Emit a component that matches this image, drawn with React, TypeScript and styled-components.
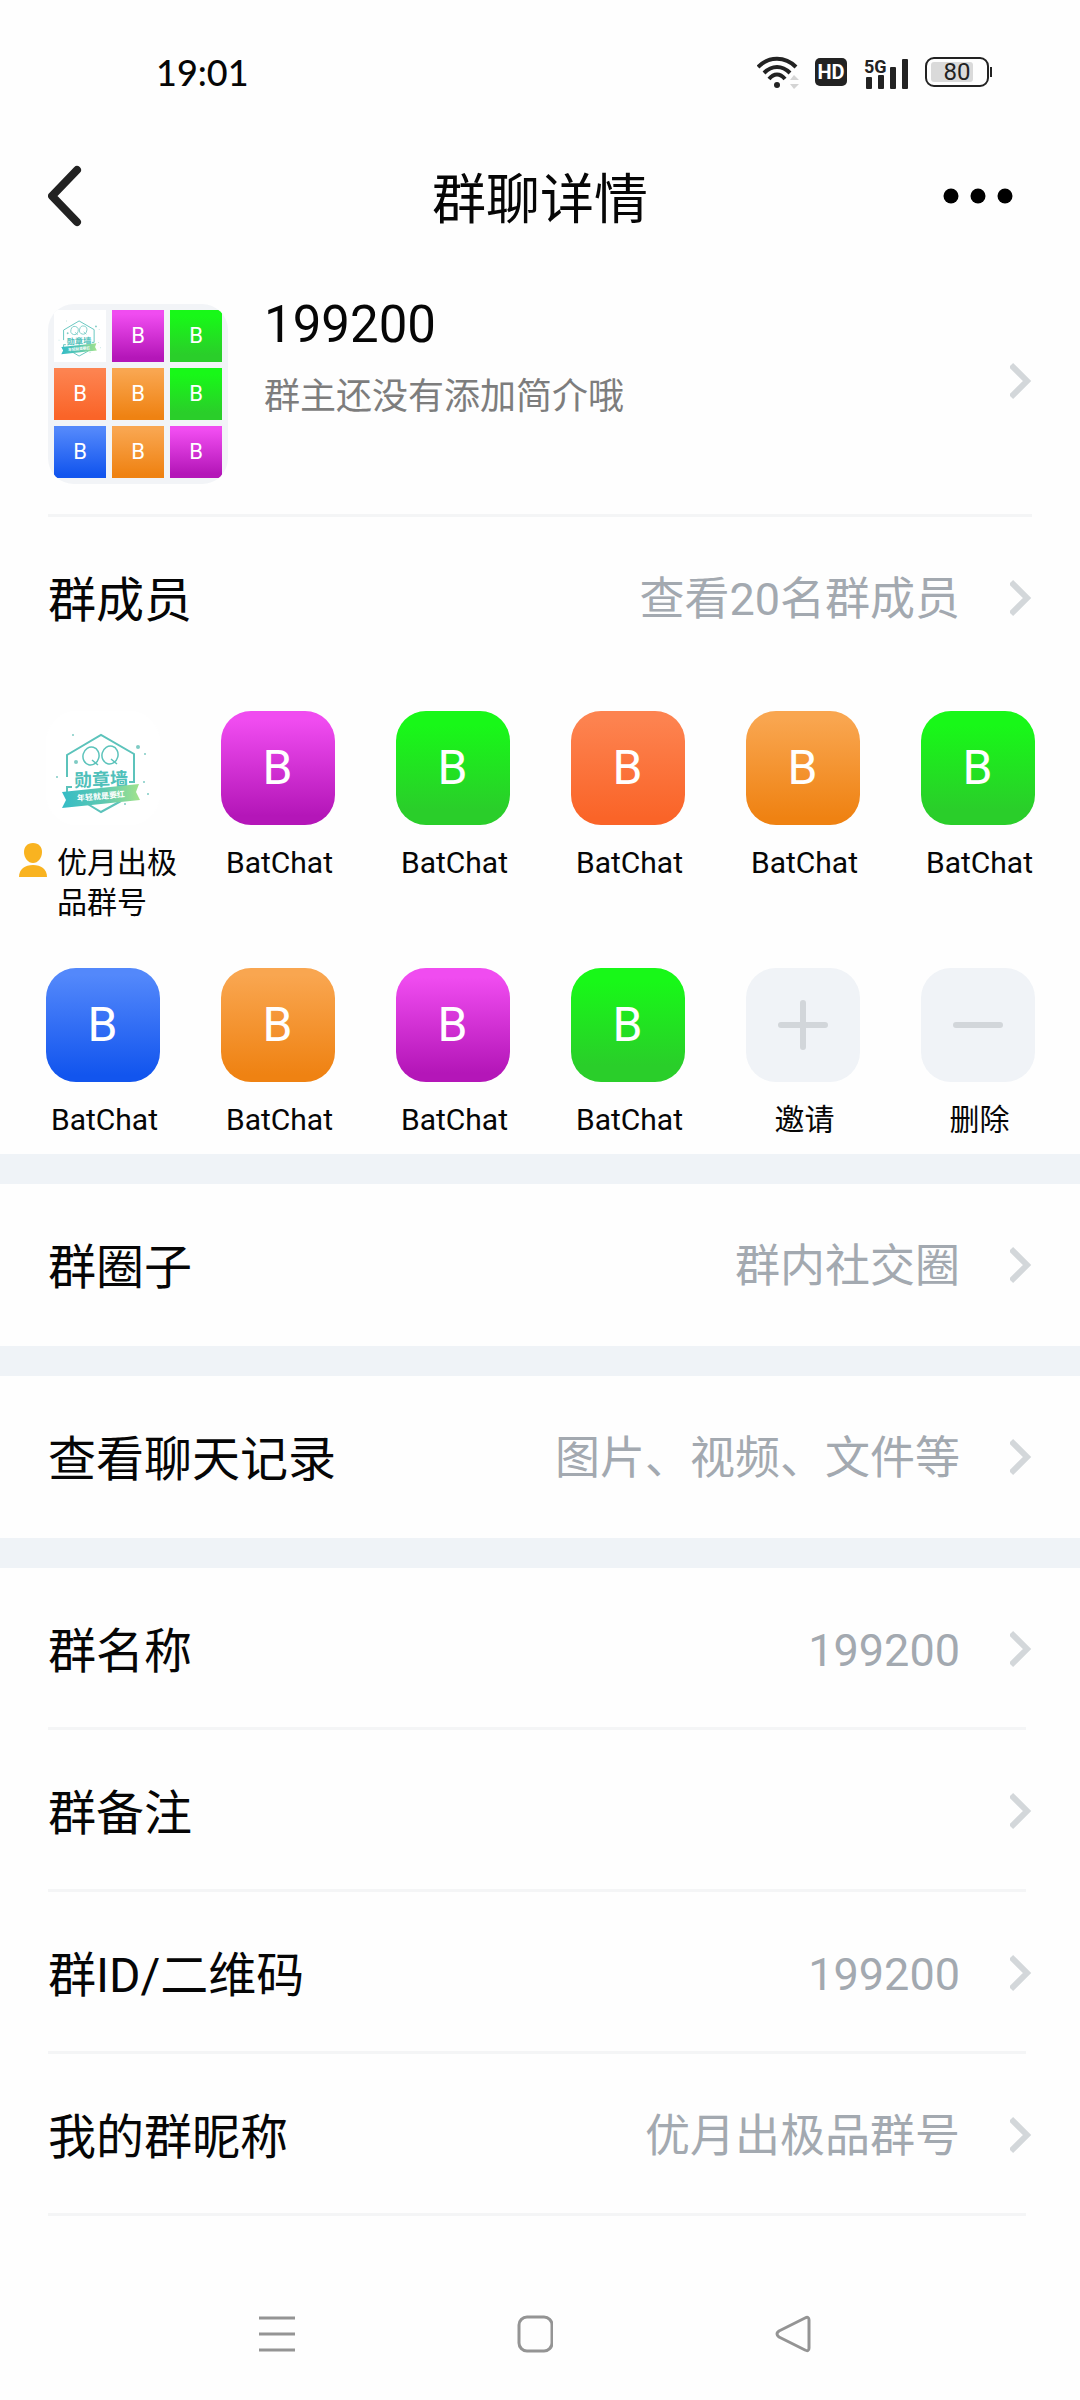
import React from "react";
import styled, { createGlobalStyle } from "styled-components";

const sans = `Roboto, "Noto Sans CJK SC", sans-serif`;

const GlobalStyle = createGlobalStyle`
  *, *::before, *::after { box-sizing: border-box; }
  html { -webkit-text-size-adjust: 100%; }
  body { margin: 0; background: #fefefe; color: #060606; font-family: ${sans}; }
  button { margin: 0; padding: 0; border: 0; background: none; color: inherit; font: inherit; cursor: pointer; }
  h1, h2, p, ul { margin: 0; padding: 0; font-weight: 400; }
  ul { list-style: none; }
  svg { display: block; flex: none; }
`;

type Tone = "magenta" | "green" | "coral" | "amber" | "blue";

const tones: Record<Tone, string> = {
  magenta: "linear-gradient(180deg, #f04cf0 8%, #b416b8 92%)",
  green: "linear-gradient(180deg, #18f818 12%, #2ace2a 86%)",
  coral: "linear-gradient(180deg, #fd8350 6%, #fa6428 94%)",
  amber: "linear-gradient(180deg, #f9a650 6%, #ef8212 94%)",
  blue: "linear-gradient(180deg, #5388fb 6%, #1255ee 94%)",
};

const Page = styled.div`
  display: flex;
  flex-direction: column;
  min-height: 100vh;
`;

/* ---------- status bar ---------- */

const StatusBar = styled.div`
  display: flex;
  align-items: center;
  justify-content: space-between;
  height: 145px;
  padding: 0 87px 2px 156px;
`;

const Clock = styled.time`
  font: 500 36px/44px Lato, ${sans};
`;

const StatusIcons = styled.div`
  display: flex;
  align-items: center;
  gap: 16px;
`;

const WifiIcon = () => (
  <svg width="42" height="36" viewBox="0 0 42 36" fill="none" aria-label="Wi-Fi">
    <g stroke="#222" strokeWidth="4">
      <path d="M1 13C12 2 28 2 39 13" />
      <path d="M7 19C15 11 25 11 33 19" />
      <path d="M12 25C17 19 23 19 28 25" />
    </g>
    <circle cx="20" cy="31" r="3" fill="#222" />
    <path d="M33 26L37 21L42 26ZM33 30L37 35L42 30Z" fill="#d4d4d4" />
  </svg>
);

const HdBadge = styled.span`
  display: grid;
  place-items: center;
  width: 32px;
  height: 28px;
  border-radius: 5px;
  background: #222;
  color: #fff;
  font: 700 20px/28px ${sans};
`;

const SignalIcon = () => (
  <svg width="46" height="34" viewBox="0 0 46 34" fill="#222" aria-label="5G">
    <text x="1" y="18" fontFamily="Roboto, sans-serif" fontWeight="700" fontSize="18">5G</text>
    <rect x="3" y="22" width="6" height="12" rx="1" />
    <rect x="15" y="20" width="6" height="14" rx="1" />
    <rect x="27" y="12" width="6" height="22" rx="1" />
    <rect x="39" y="4" width="6" height="30" rx="1" />
  </svg>
);

const BatteryIcon = () => (
  <svg width="68" height="30" viewBox="0 0 68 30" aria-label="80%">
    <rect x="6" y="5" width="42" height="20" rx="3" fill="#dadada" />
    <rect x="1" y="1" width="62" height="28" rx="8" fill="none" stroke="#222" strokeWidth="2" />
    <path d="M65 10h2v10h-2z" fill="#222" />
    <text x="32" y="23" textAnchor="middle" fontFamily="Roboto, sans-serif" fontSize="24" fill="#222">80</text>
  </svg>
);

/* ---------- title bar ---------- */

const TitleBar = styled.header`
  display: grid;
  grid-template-columns: 1fr auto 1fr;
  align-items: center;
  height: 102px;
  padding: 0 48px;
`;

const Title = styled.h1`
  padding-top: 10px;
  font-size: 54px;
  line-height: 64px;
`;

const BarButton = styled.button<{ $end?: boolean }>`
  justify-self: ${(p) => (p.$end ? "end" : "start")};
  padding-right: ${(p) => (p.$end ? 18 : 0)}px;
`;

/* ---------- group summary ---------- */

const Summary = styled.button`
  display: flex;
  align-items: center;
  width: 100%;
  padding: 30px 48px;
  text-align: left;
`;

const Mosaic = styled.span`
  display: grid;
  grid-template-columns: repeat(3, 52px);
  gap: 6px;
  margin-top: 27px;
  padding: 6px;
  border-radius: 26px;
  overflow: hidden;
  background: #f2f4f7;
`;

const Tile = styled.span<{ $tone?: Tone }>`
  display: grid;
  place-items: center;
  height: 52px;
  background: ${(p) => (p.$tone ? tones[p.$tone] : "#fff")};
  color: #fff;
  font-size: 22px;
  line-height: 28px;
`;

const SummaryText = styled.span`
  flex: 1;
  align-self: flex-start;
  min-width: 0;
  padding: 18px 0 0 36px;
`;

const GroupName = styled.span`
  display: block;
  font-size: 51px;
  line-height: 60px;
`;

const Intro = styled.span`
  display: block;
  padding-top: 20px;
  color: #7d7d7d;
  font-size: 36px;
  line-height: 44px;
`;

const Divider = styled.hr<{ $wide?: boolean }>`
  width: auto;
  height: 3px;
  margin: 0 ${(p) => (p.$wide ? 48 : 54)}px 0 48px;
  border: 0;
  background: #f4f5f6;
`;

/* ---------- setting rows ---------- */

const RowButton = styled.button<{ $ruled?: boolean }>`
  display: flex;
  align-items: center;
  width: 100%;
  height: ${(p) => (p.$ruled ? 159 : 162)}px;
  padding: ${(p) => (p.$ruled ? 3 : 0)}px 48px 0;
  text-align: left;
`;

const RowLabel = styled.span`
  flex: 1;
  padding-top: 6px;
  font-size: 48px;
  line-height: 60px;
`;

const RowValue = styled.span`
  padding: 3px 50px 0 0;
  color: #a3a9b0;
  font-size: 45px;
  line-height: 60px;
`;

const Band = styled.div`
  height: 30px;
  background: #eff3f7;
`;

const Chevron = () => (
  <svg width="22" height="38" viewBox="0 0 22 38" fill="none" aria-hidden="true">
    <path d="M1 3L17 19L1 35" stroke="#d3d7da" strokeWidth="6" />
  </svg>
);

const Row = ({ label, value, ruled }: { label: string; value?: string; ruled?: boolean }) => (
  <>
    <RowButton type="button" $ruled={ruled}>
      <RowLabel>{label}</RowLabel>
      {value && <RowValue>{value}</RowValue>}
      <Chevron />
    </RowButton>
    {ruled && <Divider />}
  </>
);

/* ---------- members ---------- */

const MemberGrid = styled.ul`
  display: grid;
  grid-template-columns: repeat(6, 1fr);
  grid-auto-rows: 225px;
  row-gap: 32px;
  padding: 32px 15px 0;
  height: 475px;
`;

const Member = styled.button`
  display: flex;
  flex-direction: column;
  align-items: center;
  gap: 18px;
  width: 100%;
`;

const Avatar = styled.span<{ $tone?: Tone; $plain?: boolean }>`
  display: grid;
  place-items: center;
  width: 114px;
  height: 114px;
  border-radius: 30px;
  overflow: hidden;
  background: ${(p) => (p.$tone ? tones[p.$tone] : p.$plain ? "#fff" : "#f0f3f7")};
  color: #fff;
  font-size: 48px;
  line-height: 56px;
`;

const MemberName = styled.span`
  display: flex;
  align-items: flex-start;
  justify-content: center;
  gap: 10px;
  width: 100%;
  padding-left: 4px;
  font-size: 30px;
  line-height: 40px;
  text-align: left;
`;

const OwnerName = styled.span`
  flex: 1;
`;

const OwnerIcon = () => (
  <svg width="28" height="36" viewBox="0 0 28 36" fill="#f9b320" aria-label="群主">
    <path d="M14 0C20 0 23 4 23 9C23 15 19 20 14 20C9 20 5 15 5 9C5 4 8 0 14 0Z" />
    <path d="M0 34C0 26 6 22 14 22C22 22 28 26 28 34Z" />
  </svg>
);

const MedalLogo = ({ size, id }: { size: number; id: string }) => (
  <svg width={size} height={size} viewBox="0 0 114 114" aria-label="QQ勋章墙">
    <defs>
      <linearGradient id={id} gradientUnits="userSpaceOnUse" x1="16" y1="0" x2="94" y2="0">
        <stop offset="0" stopColor="#35bcc6" />
        <stop offset="0.55" stopColor="#5fc9b0" />
        <stop offset="1" stopColor="#a2e38c" />
      </linearGradient>
    </defs>
    <g fill="none" stroke="#5cc3bb" strokeWidth="2">
      <path d="M21 66V44L55 24L88 43V71H83" />
      <path d="M21 83V76H26M40 92L55 101L75 90" />
    </g>
    <g fill="none" stroke="#5cc3bb" strokeWidth="1.500">
      <ellipse cx="45" cy="45" rx="8" ry="9" transform="rotate(15 45 45)" />
      <ellipse cx="64" cy="44" rx="8" ry="9" transform="rotate(15 64 44)" />
      <path d="M46 49L52 54M65 48L71 53" />
    </g>
    <text x="55" y="75" textAnchor="middle" fontFamily="Noto Sans CJK SC, sans-serif" fontWeight="700" fontSize="18" fill="#4fc0ba" transform="rotate(-2 55 70)">勋章墙</text>
    <path d="M16 81L93 73L90 81L94 89L16 97L20 89Z" fill={`url(#${id})`} />
    <text x="55" y="88" textAnchor="middle" fontFamily="Noto Sans CJK SC, sans-serif" fontWeight="700" fontSize="8" fill="#fff" transform="rotate(-5 55 86)">年轻就是要红</text>
    <g fill="#7fcbc4">
      <circle cx="27" cy="24" r="1" />
      <circle cx="30" cy="51" r="2" />
      <circle cx="92" cy="36" r="2" />
      <circle cx="99" cy="43" r="1" />
      <circle cx="11" cy="66" r="1" />
      <circle cx="98" cy="71" r="1" />
      <circle cx="102" cy="83" r="1" />
      <circle cx="79" cy="93" r="1" />
    </g>
  </svg>
);

const PlusIcon = () => (
  <svg width="52" height="52" viewBox="0 0 52 52" stroke="#d2d6da" strokeWidth="6" strokeLinecap="round" aria-hidden="true">
    <path d="M4 26H48M26 4V48" />
  </svg>
);

const MinusIcon = () => (
  <svg width="52" height="52" viewBox="0 0 52 52" stroke="#d2d6da" strokeWidth="6" strokeLinecap="round" aria-hidden="true">
    <path d="M4 26H48" />
  </svg>
);

/* ---------- system navigation ---------- */

const NavBar = styled.nav`
  display: flex;
  height: 132px;
  margin-top: auto;
  padding: 0 158px 0 148px;
`;

const NavButton = styled.button`
  display: grid;
  flex: 1;
  place-items: center;
`;

const mosaic: (Tone | undefined)[] = [
  undefined, "magenta", "green",
  "coral", "amber", "green",
  "blue", "amber", "magenta",
];

const members: Tone[] = [
  "magenta", "green", "coral", "amber", "green",
  "blue", "amber", "magenta", "green",
];

export default function App() {
  return (
    <Page>
      <GlobalStyle />
      <StatusBar>
        <Clock>19:01</Clock>
        <StatusIcons>
          <WifiIcon />
          <HdBadge>HD</HdBadge>
          <SignalIcon />
          <BatteryIcon />
        </StatusIcons>
      </StatusBar>

      <TitleBar>
        <BarButton type="button" aria-label="返回">
          <svg width="34" height="62" viewBox="0 0 34 62" fill="none" stroke="#222" strokeWidth="8" strokeLinecap="round" strokeLinejoin="round">
            <path d="M29 5L4 31L29 57" />
          </svg>
        </BarButton>
        <Title>群聊详情</Title>
        <BarButton type="button" aria-label="更多" $end>
          <svg width="72" height="16" viewBox="0 0 72 16" fill="#000">
            <circle cx="9" cy="8" r="7.500" />
            <circle cx="36" cy="8" r="7.500" />
            <circle cx="63" cy="8" r="7.500" />
          </svg>
        </BarButton>
      </TitleBar>

      <main>
        <Summary type="button">
          <Mosaic>
            {mosaic.map((tone, i) => (
              <Tile key={i} $tone={tone}>
                {tone ? "B" : <MedalLogo size={52} id="medal-small" />}
              </Tile>
            ))}
          </Mosaic>
          <SummaryText>
            <GroupName>199200</GroupName>
            <Intro>群主还没有添加简介哦</Intro>
          </SummaryText>
          <Chevron />
        </Summary>
        <Divider $wide />

        <Row label="群成员" value="查看20名群成员" />
        <MemberGrid>
          <li>
            <Member type="button">
              <Avatar $plain>
                <MedalLogo size={114} id="medal-large" />
              </Avatar>
              <MemberName>
                <OwnerIcon />
                <OwnerName>优月出极品群号</OwnerName>
              </MemberName>
            </Member>
          </li>
          {members.map((tone, i) => (
            <li key={i}>
              <Member type="button">
                <Avatar $tone={tone}>B</Avatar>
                <MemberName>BatChat</MemberName>
              </Member>
            </li>
          ))}
          <li>
            <Member type="button">
              <Avatar><PlusIcon /></Avatar>
              <MemberName>邀请</MemberName>
            </Member>
          </li>
          <li>
            <Member type="button">
              <Avatar><MinusIcon /></Avatar>
              <MemberName>删除</MemberName>
            </Member>
          </li>
        </MemberGrid>

        <Band />
        <Row label="群圈子" value="群内社交圈" />
        <Band />
        <Row label="查看聊天记录" value="图片、视频、文件等" />
        <Band />
        <Row label="群名称" value="199200" ruled />
        <Row label="群备注" ruled />
        <Row label="群ID/二维码" value="199200" ruled />
        <Row label="我的群昵称" value="优月出极品群号" ruled />
      </main>

      <NavBar>
        <NavButton type="button" aria-label="最近任务">
          <svg width="36" height="38" viewBox="0 0 36 38" stroke="#949494" strokeWidth="3">
            <path d="M0 3H36M0 19H36M0 35H36" />
          </svg>
        </NavButton>
        <NavButton type="button" aria-label="主屏幕">
          <svg width="36" height="38" viewBox="0 0 36 38" fill="none" stroke="#949494" strokeWidth="3">
            <rect x="2" y="2" width="33" height="34" rx="8" />
          </svg>
        </NavButton>
        <NavButton type="button" aria-label="返回">
          <svg width="36" height="38" viewBox="0 0 36 38" fill="none" stroke="#949494" strokeWidth="3" strokeLinejoin="round">
            <path d="M30 3Q34 1 34 5V33Q34 37 30 35L4 22Q0 19 4 16Z" />
          </svg>
        </NavButton>
      </NavBar>
    </Page>
  );
}
